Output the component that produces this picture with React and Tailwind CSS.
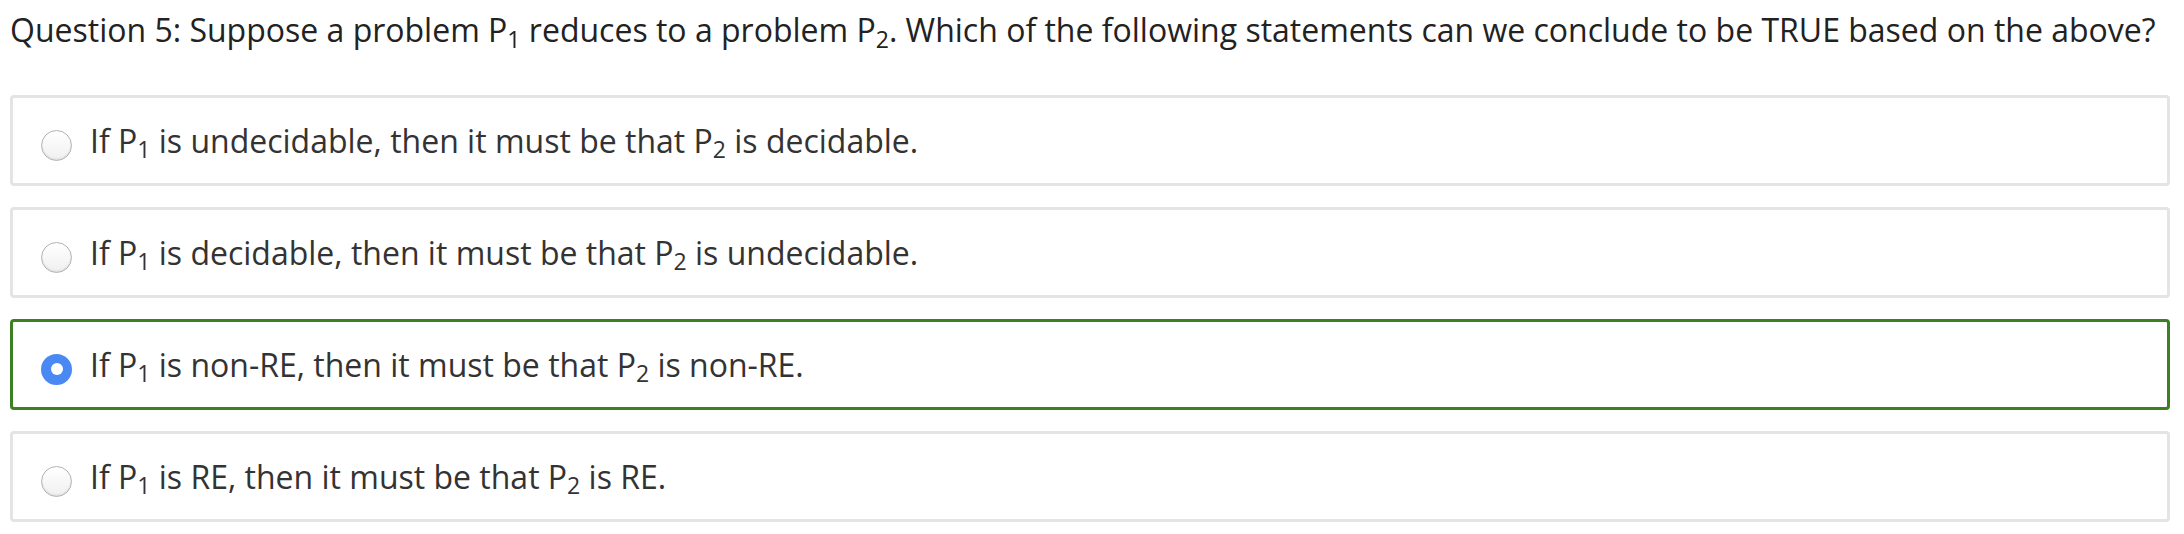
import React from "react";

const options = [
  { id: 1, before: "is undecidable, then it must be that", after: "is decidable." },
  { id: 2, before: "is decidable, then it must be that", after: "is undecidable." },
  { id: 3, before: "is non-RE, then it must be that", after: "is non-RE.", selected: true },
  { id: 4, before: "is RE, then it must be that", after: "is RE." },
];

function P({ n }) {
  return (
    <>
      P<sub className="text-[0.72em]">{n}</sub>
    </>
  );
}

function Radio({ checked }) {
  if (checked) {
    return (
      <span className="mt-[9px] w-[31px] h-[31px] shrink-0 rounded-full bg-[#4a89f3] flex items-center justify-center">
        <span className="w-[12px] h-[12px] rounded-full bg-white"></span>
      </span>
    );
  }
  return (
    <span className="mt-[9px] w-[31px] h-[31px] shrink-0 rounded-full border border-[#b3b3b3] bg-gradient-to-b from-white to-[#f0f0f0] shadow-[inset_0_-1px_2px_rgba(0,0,0,0.1)]"></span>
  );
}

export default function App() {
  return (
    <div
      className="bg-white min-h-screen pl-[10px] pr-[14px] pt-[8px] text-[#333]"
      style={{ fontFamily: '"Open Sans", sans-serif' }}
    >
      <h1 className="text-[32px] font-normal leading-[44px] text-[#222] whitespace-nowrap">
        Question 5: Suppose a problem <P n={1} /> reduces to a problem <P n={2} />. Which of the
        following statements can we conclude to be TRUE based on the above?
      </h1>

      <div className="mt-[43px] flex flex-col gap-[21px]">
        {options.map((o) => (
          <label
            key={o.id}
            className={
              o.selected
                ? "h-[91px] rounded-[4px] border-[3px] border-[#3c8024] flex items-center pl-[28px] gap-[18px]"
                : "h-[91px] rounded-[4px] border-[3px] border-[#e4e4e4] flex items-center pl-[28px] gap-[18px]"
            }
          >
            <Radio checked={o.selected} />
            <span className="text-[32px] leading-[42px]">
              If <P n={1} /> {o.before} <P n={2} /> {o.after}
            </span>
          </label>
        ))}
      </div>
    </div>
  );
}
